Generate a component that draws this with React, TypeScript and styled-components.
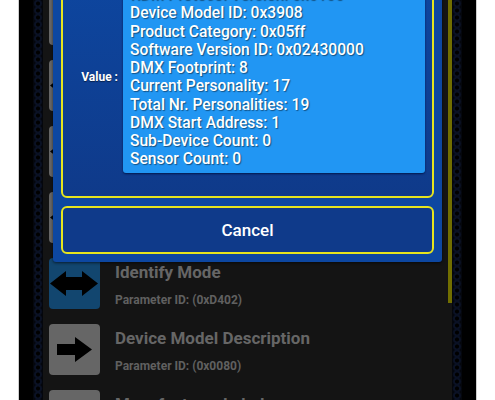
import React from "react";
import styled, { createGlobalStyle } from "styled-components";

const Global = createGlobalStyle`
  html, body { margin: 0; padding: 0; background: #fff; height: 400px; overflow: hidden; }
  body { font-family: Roboto, "Liberation Sans", sans-serif; }
`;

const Page = styled.div`
  width: 459px;
  height: 400px;
  margin-left: 18px;
  border-left: 1px solid #cfcfcf;
  border-right: 1px solid #cfcfcf;
  background: #000;
  display: flex;
  padding: 0 14px;
  box-sizing: border-box;
  overflow: hidden;
  position: relative;
`;

const Perforation = styled.div`
  width: 10px;
  flex: none;
  background-color: #04060c;
  background-image: radial-gradient(circle at center, #000 1.6px, #0a1124 2.4px, #0a1124 3.4px, rgba(10, 17, 36, 0) 4.6px);
  background-size: 10px 7px;
  background-position: 0 0;
`;

const ListPanel = styled.div`
  flex: 1;
  background: #141414;
  position: relative;
  overflow: hidden;
  padding: 0 6px;
`;

const List = styled.div`
  display: flex;
  flex-direction: column;
  gap: 15px;
  margin-top: -6px;
`;

const Row = styled.div`
  display: flex;
  align-items: stretch;
  gap: 15px;
  height: 51px;
`;

const IconTile = styled.div<{ $active?: boolean }>`
  width: 51px;
  height: 51px;
  flex: none;
  border-radius: 4px;
  background: ${(p) => (p.$active ? "#12466f" : "#666666")};
  display: flex;
`;

const RowText = styled.div`
  display: flex;
  flex-direction: column;
  padding-top: 4px;
  gap: 11px;
`;

const RowTitle = styled.div`
  font-size: 17px;
  line-height: 20px;
  font-weight: 700;
  color: #666;
  white-space: nowrap;
`;

const RowSub = styled.div`
  font-size: 12px;
  line-height: 14px;
  font-weight: 700;
  color: #606060;
  white-space: nowrap;
`;

const ScrollThumb = styled.div`
  position: absolute;
  right: 0;
  top: 0;
  width: 4px;
  height: 303px;
  background: #716e00;
`;

const Dialog = styled.div`
  position: absolute;
  left: 34px;
  top: -51px;
  width: 389px;
  box-sizing: border-box;
  padding: 8px;
  display: flex;
  flex-direction: column;
  gap: 8px;
  background: #0d47a1;
  border-radius: 3px;
  box-shadow: 0 1px 3px rgba(0, 0, 0, 0.6);
`;

const ValuePanel = styled.div`
  display: flex;
  align-items: center;
  padding: 23px 7px 23px 0;
  border: 2px solid #e6e51e;
  border-radius: 6px;
  background: linear-gradient(#0d47a1, #0f3a8a);
`;

const ValueLabel = styled.div`
  width: 55px;
  margin-right: 5px;
  text-align: right;
  font-size: 12px;
  font-weight: 700;
  color: #fff;
  text-shadow: 0 1px 1px rgba(0, 0, 0, 0.5);
  white-space: nowrap;
`;

const ValueBox = styled.div`
  flex: 1;
  padding: 4px 7px;
  background: #2196f3;
  border-radius: 3px;
  box-shadow: 0 1px 2px rgba(0, 20, 70, 0.9);
`;

const ValueLine = styled.div`
  font-size: 15.6px;
  line-height: 18.25px;
  font-weight: 500;
  color: #fff;
  text-shadow: 1px 1px 1px rgba(0, 0, 0, 0.45);
  white-space: nowrap;
`;

const CancelButton = styled.button`
  height: 48.5px;
  border: 2px solid #e6e51e;
  border-radius: 6px;
  background: #0f3a8a;
  color: #fff;
  font-family: inherit;
  font-size: 17px;
  font-weight: 500;
  padding: 0;
`;

const ArrowSvg = styled.svg`
  width: 51px;
  height: 51px;
  display: block;
`;

const SingleArrow = () => (
  <ArrowSvg viewBox="0 0 51 51">
    <path d="M8 20H26V13L43 25.5L26 38V31H8Z" fill="#000" />
  </ArrowSvg>
);

const DoubleArrow = () => (
  <ArrowSvg viewBox="0 0 51 51">
    <path d="M1 25.5L17 13V19H33V13L49 25.5L33 38V32H17V38Z" fill="#000" />
  </ArrowSvg>
);

type Item = { title: string; id: string; icon: "single" | "double"; active?: boolean };

const items: Item[] = [
  { title: "Device Info", id: "0x0060", icon: "single" },
  { title: "DMX Personality", id: "0x00E0", icon: "double" },
  { title: "DMX Start Address", id: "0x00F0", icon: "double" },
  { title: "Lamp State", id: "0x0403", icon: "double" },
  { title: "Identify Mode", id: "0xD402", icon: "double", active: true },
  { title: "Device Model Description", id: "0x0080", icon: "single" },
  { title: "Manufacturer Label", id: "0x0081", icon: "single" },
];

const values = [
  "RDM Protocol Version: 0x0100",
  "Device Model ID: 0x3908",
  "Product Category: 0x05ff",
  "Software Version ID: 0x02430000",
  "DMX Footprint: 8",
  "Current Personality: 17",
  "Total Nr. Personalities: 19",
  "DMX Start Address: 1",
  "Sub-Device Count: 0",
  "Sensor Count: 0",
];

export default function App() {
  return (
    <>
      <Global />
      <Page>
        <Perforation />
        <ListPanel>
          <List>
            {items.map((item) => (
              <Row key={item.id}>
                <IconTile $active={item.active}>
                  {item.icon === "double" ? <DoubleArrow /> : <SingleArrow />}
                </IconTile>
                <RowText>
                  <RowTitle>{item.title}</RowTitle>
                  <RowSub>Parameter ID: ({item.id})</RowSub>
                </RowText>
              </Row>
            ))}
          </List>
          <ScrollThumb />
        </ListPanel>
        <Perforation />
        <Dialog>
          <ValuePanel>
            <ValueLabel>Value :</ValueLabel>
            <ValueBox>
              {values.map((v) => (
                <ValueLine key={v}>{v}</ValueLine>
              ))}
            </ValueBox>
          </ValuePanel>
          <CancelButton>Cancel</CancelButton>
        </Dialog>
      </Page>
    </>
  );
}
